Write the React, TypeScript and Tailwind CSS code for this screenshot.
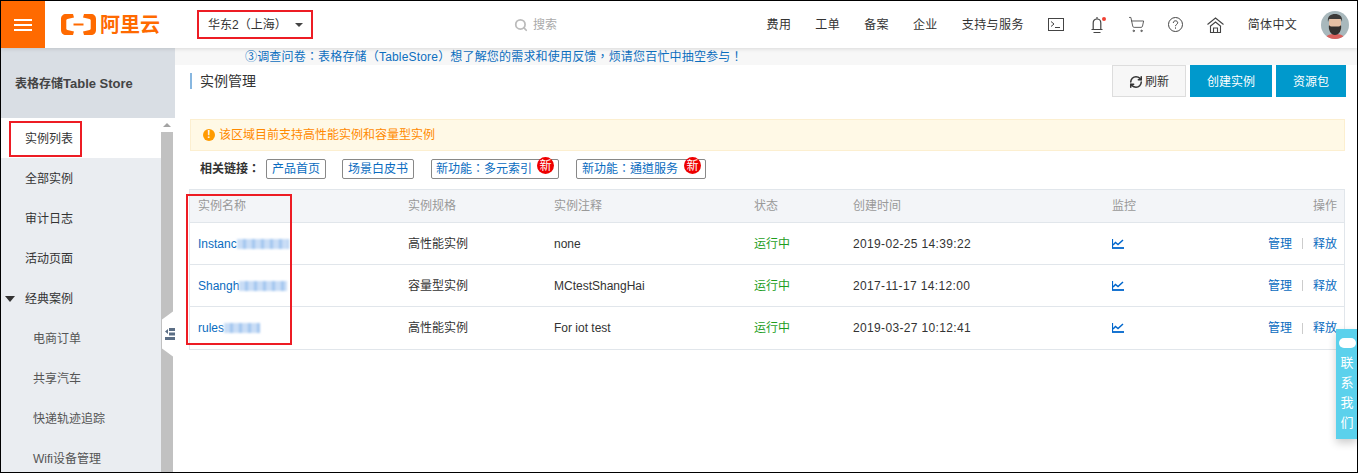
import React from 'react';
import { RefreshCw, Search, ShoppingCart } from 'lucide-react';

const font = 'font-["Liberation_Sans","Noto_Sans_CJK_SC",sans-serif]';
// TC glyphs centre the full width punctuation, like the reference
const tcFont = 'font-["Liberation_Sans","Noto_Sans_CJK_TC",sans-serif]';

const navLinks = ['费用', '工单', '备案', '企业', '支持与服务'];

const rows = [
  { name: 'Instanc', blurW: 'w-[52px]', spec: '高性能实例', note: 'none', time: '2019-02-25 14:39:22' },
  { name: 'Shangh', blurW: 'w-[48px]', spec: '容量型实例', note: 'MCtestShangHai', time: '2017-11-17 14:12:00' },
  { name: 'rules', blurW: 'w-[36px]', spec: '高性能实例', note: 'For iot test', time: '2019-03-27 10:12:41' },
];

const cols = 'grid grid-cols-[210px_146px_200px_99px_259px_1fr_auto] items-center pl-[8px] pr-[7px]';

const NewBadge = () => (
  <span className="absolute -top-[3px] right-[4px] flex h-[17px] w-[17px] items-center justify-center rounded-full bg-[#ee0000] text-[12px] leading-none text-white">
    新
  </span>
);

const ChartIcon = () => (
  <svg width="12" height="10" viewBox="0 0 12 10" fill="none" stroke="#0066cc" className="block">
    <path d="M.5 0v9" strokeWidth="1.200" />
    <path d="M0 9h12" strokeWidth="1.800" />
    <path d="M1 6l2.500-2.500L6 5.500 11 1" strokeWidth="1.500" />
  </svg>
);

export default function App() {
  return (
    <div className={`relative flex h-[473px] w-[1358px] flex-col overflow-hidden border border-black bg-white text-[12px] text-[#333] ${font}`}>
      {/* top bar */}
      <header className="z-10 flex h-[47px] shrink-0 items-center bg-white shadow-[0_1px_4px_rgba(0,0,0,0.12)]">
        <div className="flex h-full w-[44px] flex-col items-center justify-center gap-[3px] bg-[#ff6a00]">
          <span className="h-[2px] w-[18px] bg-white" />
          <span className="h-[2px] w-[18px] bg-white" />
          <span className="h-[2px] w-[18px] bg-white" />
        </div>
        <div className="ml-[16px] flex w-[99px] items-center gap-[4px] text-[#ff6a00]">
          <svg width="35" height="21" viewBox="0 0 35 21" fill="#ff6a00" className="shrink-0">
            <path d="M12 0H5C2 0 0 2 0 5v11c0 3 2 5 5 5h7l1-3.500-6.500-1.500c-.8-.2-1.200-.6-1.200-1.300V6.300c0-.7.4-1.100 1.200-1.300L13 3.500zM23 0h7c3 0 5 2 5 5v11c0 3-2 5-5 5h-7l-1-3.500 6.500-1.500c.8-.2 1.200-.6 1.200-1.300V6.300c0-.7-.4-1.100-1.200-1.300L22 3.500z" />
            <rect x="12.500" y="9.500" width="10" height="2" />
          </svg>
          <span className="text-[20px] leading-none font-bold whitespace-nowrap">阿里云</span>
        </div>
        <div className={`ml-[37px] flex items-center gap-[8px] pl-[11px] ${tcFont}`}>
          <span className="w-[79px] whitespace-nowrap">华东2（上海）</span>
          <span className="h-0 w-0 border-x-[4px] border-t-[4px] border-x-transparent border-t-[#444]" />
        </div>
        <div className="ml-[211px] flex items-center gap-[5px] text-[#aaa]">
          <Search size={14} strokeWidth={3} className="text-[#bbb]" />
          <span>搜索</span>
        </div>
        <nav className="ml-auto flex items-center">
          {navLinks.map(t => (
            <span key={t} className="mr-[24px] tracking-[0.4px] whitespace-nowrap">{t}</span>
          ))}
          <svg width="16" height="13" viewBox="0 0 16 13" fill="none" stroke="#444">
            <rect x=".5" y=".5" width="15" height="12" />
            <path d="M3 3.500l3 2.500-3 2.500M7 9.500h5" />
          </svg>
          <span className="relative ml-[27px]">
            <svg width="12" height="18" viewBox="0 0 12 18" fill="none" stroke="#444" strokeWidth="1.200" className="block">
              <path d="M6 1v2M2.200 13V7C2.200 4.700 3.700 3 6 3s3.800 1.700 3.800 4v6M.5 13.500h11M2.500 16.500h7" />
            </svg>
            <span className="absolute top-[1px] -right-[3px] h-[4px] w-[4px] rounded-full bg-[#f04134]" />
          </span>
          <ShoppingCart size={17} strokeWidth={1.200} className="ml-[25px] text-[#444]" />
          <svg width="15" height="15" viewBox="0 0 15 15" fill="none" stroke="#444" className="ml-[23px]">
            <circle cx="7.500" cy="7.500" r="7" />
            <path d="M5.300 6C5.300 4.600 6.300 3.800 7.500 3.800s2.200.8 2.200 2C9.700 7.300 7.500 7.400 7.500 9.200M7.500 10.400v1.300" />
          </svg>
          <svg width="17" height="16" viewBox="0 0 17 16" fill="none" stroke="#444" strokeWidth="1.100" className="ml-[24px]">
            <path d="M.5 7.500L8.500 1l8 6.500M3 9.500L8.500 5 14 9.500M3.500 9v6.500h10V9M6.500 15.500V11h4v4.500" />
          </svg>
          <span className="ml-[24px] tracking-[0.3px] whitespace-nowrap">简体中文</span>
          <svg width="28" height="28" viewBox="0 0 28 28" className="mr-[8px] ml-[24px] rounded-full">
            <rect width="28" height="28" fill="#a8b8bc" />
            <path d="M4 28c1-4 5-5 10-5s9 1 10 5z" fill="#d9605c" />
            <rect x="8" y="6" width="12" height="15" rx="5" fill="#e6c0a4" />
            <path d="M7 11C6 5 10 3 14 3s8 2 7 8l-1-3H8z" fill="#3c3a38" />
            <path d="M8 14c1 2 3 1.500 6 1.500S19 16 20 14c1 5-2 10-6 10S7 19 8 14z" fill="#33302e" />
          </svg>
        </nav>
      </header>

      <div className="flex min-h-0 flex-1">
        {/* sidebar */}
        <aside className="flex w-[174px] shrink-0 flex-col">
          <div className="flex h-[70px] shrink-0 items-center bg-[#d9dee4] pt-[1px] pl-[14px] font-bold text-[#444]">
            表格存储<span className="text-[13px]">Table Store</span>
          </div>
          <div className="flex min-h-0 flex-1">
            <div className="flex w-[160px] flex-col bg-[#eaedf1]">
              <div className="flex h-[40px] shrink-0 items-center bg-white pt-[1px] pl-[24px]">实例列表</div>
              {['全部实例', '审计日志', '活动页面'].map(t => (
                <div key={t} className="flex h-[40px] shrink-0 items-center pt-[1px] pl-[24px]">{t}</div>
              ))}
              <div className="flex h-[40px] shrink-0 items-center pt-[1px] pl-[4px]">
                <span className="mr-[10px] h-0 w-0 border-x-[5px] border-t-[6px] border-x-transparent border-t-[#333]" />
                经典案例
              </div>
              {['电商订单', '共享汽车', '快递轨迹追踪', 'Wifi设备管理'].map(t => (
                <div key={t} className="flex h-[40px] shrink-0 items-center pt-[1px] pl-[32px] text-[#555]">{t}</div>
              ))}
            </div>
            <div className="flex w-[12px] flex-col bg-[#c1c1c1]">
              <div className="flex h-[14px] items-center justify-center bg-white">
                <span className="h-0 w-0 border-x-[4px] border-b-[4px] border-x-transparent border-b-[#a3a3a3]" />
              </div>
            </div>
          </div>
        </aside>

        {/* main */}
        <main className="min-w-0 flex-1">
          <div className={`flex h-[17px] items-center bg-[#f7f7f7] pl-[70px] tracking-[0.18px] text-[#0d6fbf] ${tcFont}`}>
            ③调查问卷：表格存储（TableStore）想了解您的需求和使用反馈，烦请您百忙中抽空参与！
          </div>
          <div className="flex h-[32px] items-start justify-between pr-[11px] pl-[15px]">
            <div className="mt-[8px] flex items-center border-l-2 border-[#88b7e0] pl-[8px] text-[14px] leading-[16px]">实例管理</div>
            <div className="flex gap-[4px]">
              <button className="flex h-[32px] w-[74px] items-center justify-center gap-[2px] border border-[#ddd] bg-[#f7f7f7] pt-[1px]">
                <RefreshCw size={14} strokeWidth={2.600} />
                刷新
              </button>
              <button className="h-[32px] w-[82px] bg-[#0099cc] pt-[1px] text-white">创建实例</button>
              <button className="h-[32px] w-[70px] bg-[#0099cc] pt-[1px] text-white">资源包</button>
            </div>
          </div>

          <div className="mt-[22px] mr-[12px] ml-[15px] flex h-[32px] items-center gap-[4px] border border-[#fcefd0] bg-[#fff9e6] pl-[12px] text-[#ff8a00]">
            <span className="flex h-[12px] w-[12px] items-center justify-center rounded-full bg-[#ff9b00] text-[10px] leading-none font-bold text-white">!</span>
            该区域目前支持高性能实例和容量型实例
          </div>

          <div className={`mt-[8px] ml-[25px] flex h-[20px] items-center ${tcFont}`}>
            <span className="mr-[6px] font-bold">相关链接：</span>
            <span className="flex h-[20px] w-[60px] items-center justify-center rounded-[2px] border border-[#888] text-[#0a6cc0]">产品首页</span>
            <span className="ml-[16px] flex h-[20px] w-[72px] items-center justify-center rounded-[2px] border border-[#888] text-[#0a6cc0]">场景白皮书</span>
            <span className="relative ml-[17px] flex h-[20px] w-[128px] items-center rounded-[2px] border border-[#888] pl-[4px] text-[#0a6cc0]">
              新功能：多元索引
              <NewBadge />
            </span>
            <span className="relative ml-[17px] flex h-[20px] w-[130px] items-center rounded-[2px] border border-[#888] pl-[5px] text-[#0a6cc0]">
              新功能：通道服务
              <NewBadge />
            </span>
          </div>

          <div className="mt-[10px] mr-[12px] ml-[14px] border border-[#e1e6eb]">
            <div className={`${cols} h-[33px] border-b border-[#e1e6eb] bg-[#f3f5f8] text-[#999]`}>
              <span>实例名称</span>
              <span>实例规格</span>
              <span>实例注释</span>
              <span>状态</span>
              <span>创建时间</span>
              <span>监控</span>
              <span>操作</span>
            </div>
            {rows.map(r => (
              <div key={r.name} className={`${cols} h-[42px] border-b border-[#e1e6eb] last:border-b-0`}>
                <span className="flex items-center text-[#0a6cc0]">
                  {r.name}
                  <span className={`${r.blurW} h-[10px] bg-[repeating-linear-gradient(90deg,#c9ddf6_0,#c9ddf6_6px,#a3c6ef_6px,#a3c6ef_9px)] blur-[1px]`} />
                </span>
                <span>{r.spec}</span>
                <span>{r.note}</span>
                <span className="text-[#1e9e1e]">运行中</span>
                <span className="tracking-[0.35px]">{r.time}</span>
                <span><ChartIcon /></span>
                <span className="flex items-center text-[#0a6cc0]">
                  管理
                  <span className="mx-[10px] h-[11px] w-px bg-[#ccc]" />
                  释放
                </span>
              </div>
            ))}
          </div>
        </main>
      </div>

      {/* sidebar collapse tab */}
      <div className="absolute top-[309px] left-[161px] flex h-[48px] w-[13px] items-center justify-end bg-white [clip-path:polygon(0_20%,100%_0,100%_100%,0_80%)]">
        <svg width="10" height="12" viewBox="0 0 10 12" fill="#5b6e85">
          <path d="M4 0h6v3H4zM4 4.500h6v3H4zM0 9h10v3H0zM3 1v5L0 3.500z" />
        </svg>
      </div>

      {/* contact us float */}
      <div className="absolute top-[328px] right-0 flex h-[110px] w-[21px] flex-col items-center bg-[#5bd1ec] pt-[9px] pl-[1px] text-[13px] leading-[20px] text-white shadow-[0_4px_8px_rgba(0,0,0,0.2)]">
        <span className="mb-[5px] h-[10px] w-[17px] shrink-0 rounded-[5px] bg-white" />
        <span>联</span>
        <span>系</span>
        <span>我</span>
        <span>们</span>
      </div>

      {/* red annotation boxes */}
      <div className="absolute top-[9px] left-[196px] z-20 h-[29px] w-[116px] border-2 border-[#ed1c24]" />
      <div className="absolute top-[120px] left-[8px] z-20 h-[36px] w-[73px] border-2 border-[#ed1c24]" />
      <div className="absolute top-[193px] left-[185px] z-20 h-[151px] w-[106px] border-2 border-[#ed1c24]" />
    </div>
  );
}
